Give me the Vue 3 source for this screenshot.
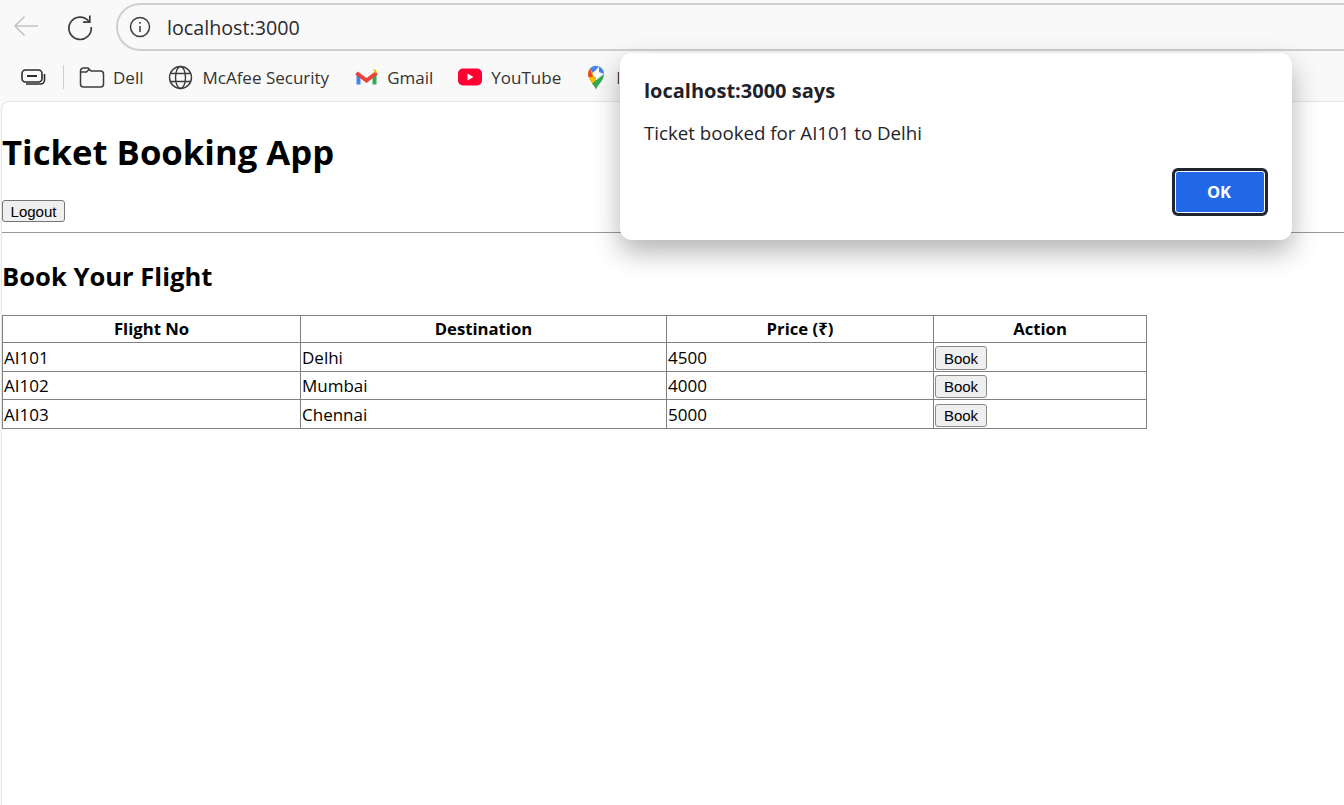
<script setup>
const flights = [
  { no: "AI101", to: "Delhi", price: 4500 },
  { no: "AI102", to: "Mumbai", price: 4000 },
  { no: "AI103", to: "Chennai", price: 5000 }
];
</script>

<template>
  <div class="browser">
    <div class="toolbar">
      <svg class="back" width="28" height="24" viewBox="0 0 28 24" fill="none" stroke="#c4c4c6" stroke-width="1.6">
        <path d="M26 12H3M12.5 2.5L3 12l9.500 9.500" />
      </svg>
      <svg class="reload" width="28" height="28" viewBox="0 0 28 28" fill="none" stroke="#3c3c3e" stroke-width="1.700">
        <path d="M23 8.500A11.200 11.200 0 1 0 25.200 14" />
        <path d="M23.800 2.500v6.700h-6.700" />
      </svg>
      <div class="address">
        <svg width="22" height="22" viewBox="0 0 22 22" fill="none" stroke="#3c3c3e" stroke-width="1.500">
          <circle cx="11" cy="11" r="9.500" />
          <path d="M11 10v6M11 6v1.800" />
        </svg>
        <span>localhost:3000</span>
      </div>
    </div>

    <div class="bookmarks">
      <svg class="tabs" width="26" height="20" viewBox="0 0 26 20" fill="none" stroke="#2c2c2e" stroke-width="1.600">
        <rect x="2" y="3" width="20" height="12" rx="3.500" />
        <path d="M7 9h10" stroke-width="2" />
        <path d="M24.500 7v6a4 4 0 0 1-4 4H6" />
      </svg>
      <div class="sep"></div>
      <div class="mark dell">
        <svg width="26" height="24" viewBox="0 0 26 24" fill="none" stroke="#3c3c3e" stroke-width="1.500">
          <path d="M1.500 6a3 3 0 0 1 3-3h4.500l3 3h9.500a3 3 0 0 1 3 3v10a3 3 0 0 1-3 3h-17a3 3 0 0 1-3-3z" />
          <path d="M1.500 7h6l3-3" />
        </svg>
        <span>Dell</span>
      </div>
      <div class="mark mcafee">
        <svg width="25" height="25" viewBox="0 0 25 25" fill="none" stroke="#3c3c3e" stroke-width="1.400">
          <circle cx="12.500" cy="12.500" r="11" />
          <ellipse cx="12.500" cy="12.500" rx="5" ry="11" />
          <path d="M2.500 8.500h20M2.500 16.500h20" />
        </svg>
        <span>McAfee Security</span>
      </div>
      <div class="mark gmail">
        <svg width="23" height="18" viewBox="0 0 23 18" fill="none">
          <path d="M1.500 5v11.500h4V8z" fill="#4285f4" />
          <path d="M17.500 8v8.500h4V5z" fill="#34a853" />
          <path d="M1.500 5L5.500 8l6 4.500 6-4.500 4-3" stroke="#ea4335" stroke-width="4" />
          <path d="M19 1.500l2.500 3.500" stroke="#fbbc04" stroke-width="2" />
        </svg>
        <span>Gmail</span>
      </div>
      <div class="mark youtube">
        <svg width="24" height="18" viewBox="0 0 24 18">
          <rect width="24" height="17" y="0.500" rx="5" fill="#ff0033" />
          <path d="M9.500 5.500v7l6-3.500z" fill="#fff" />
        </svg>
        <span>YouTube</span>
      </div>
      <div class="mark maps">
        <svg width="18" height="25" viewBox="0 0 18 25">
          <path d="M9 24.500C7.500 20 1 15.500 1 9a8 8 0 0 1 8-8z" fill="#fbbc04" />
          <path d="M9 24.500C10.500 20 17 15.500 17 9L5 18.500c1.800 2.200 3.300 3.700 4 6z" fill="#34a853" />
          <path d="M3 3.500L6 12 1.500 12C.5 8.500 1.500 5.500 3 3.500z" fill="#ea4335" />
          <path d="M3 3.500A8 8 0 0 1 12 1.500L6 8z" fill="#4285f4" />
          <path d="M12 1.500A8 8 0 0 1 17 9l-5-2z" fill="#4285f4" />
          <circle cx="9" cy="9" r="3" fill="#fff" />
        </svg>
        <span class="clipped">Maps</span>
      </div>
    </div>

    <div class="page">
      <h1>Ticket Booking App</h1>
      <button class="native logout">Logout</button>
      <hr />
      <h2>Book Your Flight</h2>
      <table>
        <thead>
          <tr>
            <th class="c1">Flight No</th>
            <th class="c2">Destination</th>
            <th class="c3">Price (₹)</th>
            <th class="c4">Action</th>
          </tr>
        </thead>
        <tbody>
          <tr v-for="f in flights" :key="f.no">
            <td>{{ f.no }}</td>
            <td>{{ f.to }}</td>
            <td>{{ f.price }}</td>
            <td class="action"><button class="native book">Book</button></td>
          </tr>
        </tbody>
      </table>
    </div>

    <div class="dialog">
      <div class="dialog-title">localhost:3000 says</div>
      <div class="dialog-msg">Ticket booked for AI101 to Delhi</div>
      <div class="dialog-actions">
        <button class="ok">OK</button>
      </div>
    </div>
  </div>
</template>

<style scoped>
.browser {
  position: relative;
  width: 1344px;
  height: 805px;
  overflow: hidden;
  background: #f9f9f9;
  font-family: "Open Sans", "Noto Sans", sans-serif;
  color: #000;
}

.toolbar {
  height: 53px;
  box-sizing: border-box;
  display: flex;
  align-items: flex-start;
  padding-top: 3px;
  padding-left: 12px;
}

.toolbar > * {
  flex-shrink: 0;
}

.back {
  margin-top: 11px;
}

.reload {
  margin-top: 10px;
  margin-left: 26px;
}

.address {
  margin-left: 22px;
  width: 1300px;
  height: 48px;
  box-sizing: border-box;
  border: 2px solid #cfcfcf;
  border-radius: 24px;
  background: #f9f9f9;
  display: flex;
  align-items: center;
  padding-left: 11px;
  gap: 16px;
  font-size: 19.700px;
  color: #2b2b2b;
}

.bookmarks {
  height: 48px;
  display: flex;
  align-items: center;
  padding-left: 20px;
  font-size: 17px;
  color: #333;
}

.bookmarks svg {
  flex-shrink: 0;
}

.sep {
  width: 1px;
  height: 24px;
  background: #d0d0d0;
  margin: 0 15px 0 17px;
}

.mark {
  display: flex;
  align-items: center;
  gap: 9px;
  margin-right: 24px;
}

.dell {
  gap: 8px;
  margin-right: 25px;
}

.mcafee {
  margin-right: 26px;
}

.gmail {
  margin-right: 25px;
}

.youtube {
  margin-right: 26px;
}

.maps {
  gap: 11px;
  margin-right: 0;
}

/* the alert covers everything but the first stem of this label */
.clipped {
  width: 3px;
  overflow: hidden;
}

.page {
  height: 704px;
  margin-left: 1px;
  background: #fff;
  border-top-left-radius: 8px;
  border-top: 1px solid #e6e6e6;
  border-left: 1px solid #e6e6e6;
  box-sizing: border-box;
}

h1 {
  margin: 25px 0 23px;
  font-size: 34.700px;
  line-height: 50px;
  font-weight: 700;
}

.native {
  display: block;
  font-family: "Liberation Sans", Arial, sans-serif;
  font-size: 15px;
  color: #000;
  background: #efefef;
  border: 1px solid #767676;
  border-radius: 3px;
  padding: 0;
}

.logout {
  width: 63px;
  height: 22px;
}

hr {
  margin: 10px 0 0;
  border: 0;
  border-top: 1px solid #999;
}

h2 {
  margin: 26px 0 20px;
  font-size: 25.600px;
  line-height: 36px;
  font-weight: 700;
}

table {
  border-collapse: collapse;
  table-layout: fixed;
  width: 1145px;
  font-size: 17px;
}

th,
td {
  border: 1px solid #808080;
  padding: 0 1px;
  height: 29px;
  box-sizing: border-box;
}

tbody tr:nth-child(2) td {
  height: 28px;
}

th {
  height: 27px;
  padding-bottom: 2px;
  font-size: 16.700px;
  font-weight: 700;
}

.c1 { width: 298px; }
.c2 { width: 366px; }
.c3 { width: 267px; }
.c4 { width: 213px; }

.action {
  padding-top: 2px;
}

.book {
  width: 52px;
  height: 23px;
  border-color: #8a8a8a;
}

tbody tr:first-child .book {
  height: 24px;
}

.dialog {
  position: absolute;
  left: 620px;
  top: 53px;
  width: 672px;
  height: 187px;
  box-sizing: border-box;
  padding: 24px;
  background: #fff;
  border-radius: 12px;
  box-shadow: 0 12px 28px rgba(0, 0, 0, 0.3);
  color: #1f2329;
}

.dialog-title {
  font-size: 20px;
  font-weight: 700;
  line-height: 28px;
}

.dialog-msg {
  margin-top: 14px;
  font-size: 18.700px;
  line-height: 28px;
}

.dialog-actions {
  display: flex;
  justify-content: flex-end;
  margin-top: 21px;
}

.ok {
  width: 96px;
  height: 48px;
  box-sizing: border-box;
  border: 3px solid #1f2430;
  border-radius: 6px;
  padding: 0 2px 2px 0;
  background: #2168e8;
  box-shadow: inset 0 0 0 1px #fff;
  color: #fff;
  font-family: "Open Sans", sans-serif;
  font-size: 16.500px;
  font-weight: 700;
}
</style>
